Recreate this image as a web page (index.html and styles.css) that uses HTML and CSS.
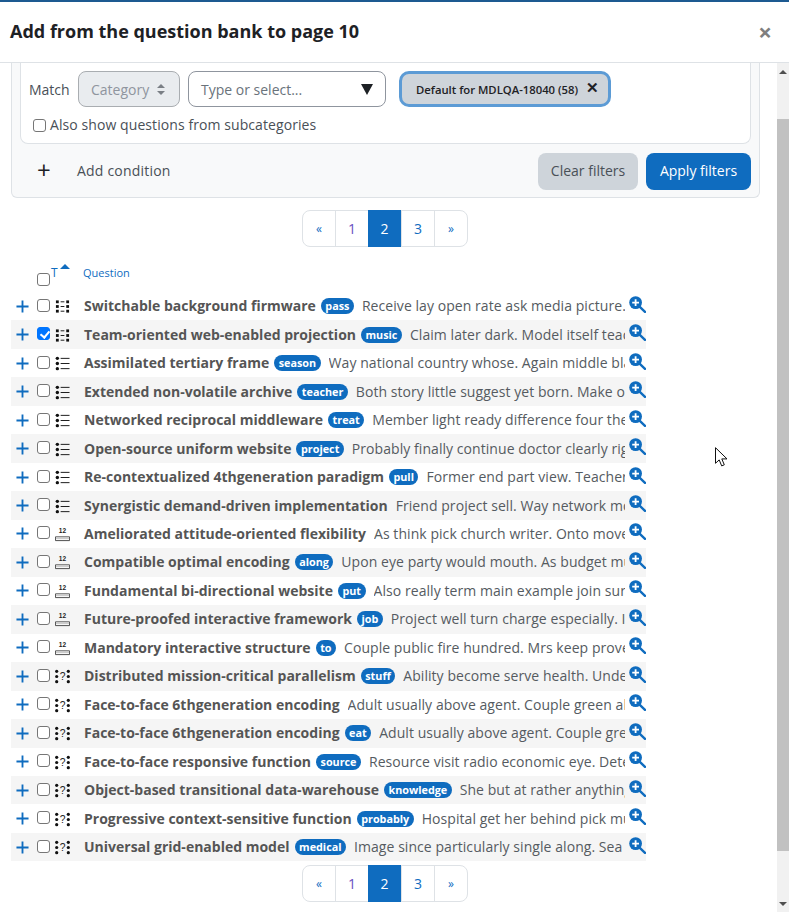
FILE: index.html
```html
<!DOCTYPE html>
<html lang="en">
<head>
    <meta charset="UTF-8">
    <title>Add from the question bank to page 10</title>
    <link rel="stylesheet" href="styles.css">
</head>
<body>
    <svg class="defs" width="0" height="0">
        <symbol id="i-match" viewBox="0 0 16 16">
            <g fill="#111"><rect x="1" y="1.5" width="3" height="3"/><rect x="1" y="6.5" width="3" height="3"/><rect x="1" y="11.5" width="3" height="3"/><rect x="12" y="1.5" width="3" height="3"/><rect x="12" y="6.5" width="3" height="3"/><rect x="12" y="11.5" width="3" height="3"/><rect x="6" y="2.5" width="4" height="1"/><rect x="6" y="7.5" width="4" height="1"/><rect x="6" y="12.5" width="4" height="1"/></g>
        </symbol>
        <symbol id="i-multi" viewBox="0 0 16 16">
            <g fill="#111"><circle cx="2.5" cy="2.5" r="1.8"/><circle cx="2.5" cy="8" r="1.8"/><circle cx="2.5" cy="13.5" r="1.8"/><rect x="6" y="2" width="9.5" height="1"/><rect x="6" y="7.5" width="9.5" height="1"/><rect x="6" y="13" width="9.5" height="1"/></g>
        </symbol>
        <symbol id="i-num" viewBox="0 0 16 16">
            <text x="8" y="6.5" font-size="7" font-weight="700" font-family="Liberation Sans, sans-serif" text-anchor="middle" fill="#222">12</text>
            <path d="M0.5 14.5v-4h15v4z" fill="#fff" stroke="#444"/>
            <rect x="1" y="11" width="14" height="2" fill="#ccc"/>
        </symbol>
        <symbol id="i-essay" viewBox="0 0 16 16">
            <g fill="#111"><circle cx="1.8" cy="2.5" r="1.7"/><circle cx="1.8" cy="8" r="1.7"/><circle cx="1.8" cy="13.5" r="1.7"/><circle cx="14.2" cy="2.5" r="1.7"/><circle cx="14.2" cy="8" r="1.7"/><circle cx="14.2" cy="13.5" r="1.7"/></g>
            <text x="8" y="12" font-size="11" font-family="Liberation Sans, sans-serif" text-anchor="middle" fill="#222">?</text>
        </symbol>
        <symbol id="i-plus" viewBox="0 0 14 14">
            <path d="M7 .5v13M.5 7h13" stroke="#0f6cbf" stroke-width="2" fill="none"/>
        </symbol>
        <symbol id="i-preview" viewBox="0 0 17 17">
            <circle cx="6.6" cy="6.6" r="6.4" fill="#0f6cbf"/>
            <path d="M10.8 10.8l5.2 5" stroke="#0f6cbf" stroke-width="2.4" stroke-linecap="round"/>
            <path d="M6.6 3.2v6.8M3.2 6.6h6.8" stroke="#fff" stroke-width="1.8"/>
        </symbol>
    </svg>

    <div class="modal">
        <div class="modal-header">
            <h5>Add from the question bank to page 10</h5>
            <span class="close">×</span>
        </div>
        <div class="modal-body">
            <div class="content">
                <div class="filter-card">
                    <div class="condition">
                        <div class="match-row">
                            <span class="match-label">Match</span>
                            <span class="select-fake">Category <span class="updown"></span></span>
                            <span class="combo">Type or select...<span class="combo-arrow"></span></span>
                            <span class="tag">Default for MDLQA-18040 (58)<span class="tag-x">✕</span></span>
                        </div>
                        <label class="subcat"><span class="cb"></span>Also show questions from subcategories</label>
                    </div>
                    <div class="filter-actions">
                        <span class="add-plus">+</span>
                        <span class="add-text">Add condition</span>
                        <span class="btn btn-grey">Clear filters</span>
                        <span class="btn btn-blue">Apply filters</span>
                    </div>
                </div>

                <div class="pager-wrap">
                    <div class="pager">
                        <a class="arrow">«</a><a class="visited">1</a><a class="current">2</a><a>3</a><a class="arrow">»</a>
                    </div>
                </div>

                <div class="q-head">
                    <span class="cb head-cb"></span>
                    <span class="head-t">T</span>
                    <span class="head-caret"></span>
                    <span class="head-q">Question</span>
                </div>

                <div class="q-list">
                    <div class="q-row"><svg class="plus"><use href="#i-plus"/></svg><span class="cb"></span><svg class="qtype"><use href="#i-match"/></svg><b class="q-name">Switchable background firmware</b><span class="badge">pass</span><span class="q-text">Receive lay open rate ask media picture. Thing around</span><svg class="preview"><use href="#i-preview"/></svg></div>
                    <div class="q-row"><svg class="plus"><use href="#i-plus"/></svg><span class="cb checked"></span><svg class="qtype"><use href="#i-match"/></svg><b class="q-name">Team-oriented web-enabled projection</b><span class="badge">music</span><span class="q-text">Claim later dark. Model itself teach road about</span><svg class="preview"><use href="#i-preview"/></svg></div>
                    <div class="q-row"><svg class="plus"><use href="#i-plus"/></svg><span class="cb"></span><svg class="qtype"><use href="#i-multi"/></svg><b class="q-name">Assimilated tertiary frame</b><span class="badge">season</span><span class="q-text">Way national country whose. Again middle black thing around</span><svg class="preview"><use href="#i-preview"/></svg></div>
                    <div class="q-row"><svg class="plus"><use href="#i-plus"/></svg><span class="cb"></span><svg class="qtype"><use href="#i-multi"/></svg><b class="q-name">Extended non-volatile archive</b><span class="badge">teacher</span><span class="q-text">Both story little suggest yet born. Make out early</span><svg class="preview"><use href="#i-preview"/></svg></div>
                    <div class="q-row"><svg class="plus"><use href="#i-plus"/></svg><span class="cb"></span><svg class="qtype"><use href="#i-multi"/></svg><b class="q-name">Networked reciprocal middleware</b><span class="badge">treat</span><span class="q-text">Member light ready difference four the other side</span><svg class="preview"><use href="#i-preview"/></svg></div>
                    <div class="q-row"><svg class="plus"><use href="#i-plus"/></svg><span class="cb"></span><svg class="qtype"><use href="#i-multi"/></svg><b class="q-name">Open-source uniform website</b><span class="badge">project</span><span class="q-text">Probably finally continue doctor clearly right now today</span><svg class="preview"><use href="#i-preview"/></svg></div>
                    <div class="q-row"><svg class="plus"><use href="#i-plus"/></svg><span class="cb"></span><svg class="qtype"><use href="#i-multi"/></svg><b class="q-name">Re-contextualized 4thgeneration paradigm</b><span class="badge">pull</span><span class="q-text">Former end part view. Teacher about</span><svg class="preview"><use href="#i-preview"/></svg></div>
                    <div class="q-row"><svg class="plus"><use href="#i-plus"/></svg><span class="cb"></span><svg class="qtype"><use href="#i-multi"/></svg><b class="q-name">Synergistic demand-driven implementation</b><span class="q-text">Friend project sell. Way network more about</span><svg class="preview"><use href="#i-preview"/></svg></div>
                    <div class="q-row"><svg class="plus"><use href="#i-plus"/></svg><span class="cb"></span><svg class="qtype"><use href="#i-num"/></svg><b class="q-name">Ameliorated attitude-oriented flexibility</b><span class="q-text">As think pick church writer. Onto move about</span><svg class="preview"><use href="#i-preview"/></svg></div>
                    <div class="q-row"><svg class="plus"><use href="#i-plus"/></svg><span class="cb"></span><svg class="qtype"><use href="#i-num"/></svg><b class="q-name">Compatible optimal encoding</b><span class="badge">along</span><span class="q-text">Upon eye party would mouth. As budget much about</span><svg class="preview"><use href="#i-preview"/></svg></div>
                    <div class="q-row"><svg class="plus"><use href="#i-plus"/></svg><span class="cb"></span><svg class="qtype"><use href="#i-num"/></svg><b class="q-name">Fundamental bi-directional website</b><span class="badge">put</span><span class="q-text">Also really term main example join sure about</span><svg class="preview"><use href="#i-preview"/></svg></div>
                    <div class="q-row"><svg class="plus"><use href="#i-plus"/></svg><span class="cb"></span><svg class="qtype"><use href="#i-num"/></svg><b class="q-name">Future-proofed interactive framework</b><span class="badge">job</span><span class="q-text">Project well turn charge especially. I have about</span><svg class="preview"><use href="#i-preview"/></svg></div>
                    <div class="q-row"><svg class="plus"><use href="#i-plus"/></svg><span class="cb"></span><svg class="qtype"><use href="#i-num"/></svg><b class="q-name">Mandatory interactive structure</b><span class="badge">to</span><span class="q-text">Couple public fire hundred. Mrs keep prove about</span><svg class="preview"><use href="#i-preview"/></svg></div>
                    <div class="q-row"><svg class="plus"><use href="#i-plus"/></svg><span class="cb"></span><svg class="qtype"><use href="#i-essay"/></svg><b class="q-name">Distributed mission-critical parallelism</b><span class="badge">stuff</span><span class="q-text">Ability become serve health. Under about</span><svg class="preview"><use href="#i-preview"/></svg></div>
                    <div class="q-row"><svg class="plus"><use href="#i-plus"/></svg><span class="cb"></span><svg class="qtype"><use href="#i-essay"/></svg><b class="q-name">Face-to-face 6thgeneration encoding</b><span class="q-text">Adult usually above agent. Couple green about the</span><svg class="preview"><use href="#i-preview"/></svg></div>
                    <div class="q-row"><svg class="plus"><use href="#i-plus"/></svg><span class="cb"></span><svg class="qtype"><use href="#i-essay"/></svg><b class="q-name">Face-to-face 6thgeneration encoding</b><span class="badge">eat</span><span class="q-text">Adult usually above agent. Couple green about the</span><svg class="preview"><use href="#i-preview"/></svg></div>
                    <div class="q-row"><svg class="plus"><use href="#i-plus"/></svg><span class="cb"></span><svg class="qtype"><use href="#i-essay"/></svg><b class="q-name">Face-to-face responsive function</b><span class="badge">source</span><span class="q-text">Resource visit radio economic eye. Determine about</span><svg class="preview"><use href="#i-preview"/></svg></div>
                    <div class="q-row"><svg class="plus"><use href="#i-plus"/></svg><span class="cb"></span><svg class="qtype"><use href="#i-essay"/></svg><b class="q-name">Object-based transitional data-warehouse</b><span class="badge">knowledge</span><span class="q-text">She but at rather anything about the other</span><svg class="preview"><use href="#i-preview"/></svg></div>
                    <div class="q-row"><svg class="plus"><use href="#i-plus"/></svg><span class="cb"></span><svg class="qtype"><use href="#i-essay"/></svg><b class="q-name">Progressive context-sensitive function</b><span class="badge">probably</span><span class="q-text">Hospital get her behind pick much about the</span><svg class="preview"><use href="#i-preview"/></svg></div>
                    <div class="q-row"><svg class="plus"><use href="#i-plus"/></svg><span class="cb"></span><svg class="qtype"><use href="#i-essay"/></svg><b class="q-name">Universal grid-enabled model</b><span class="badge">medical</span><span class="q-text">Image since particularly single along. Sea about the</span><svg class="preview"><use href="#i-preview"/></svg></div>
                </div>

                <div class="pager-wrap pager-bottom">
                    <div class="pager">
                        <a class="arrow">«</a><a class="visited">1</a><a class="current">2</a><a>3</a><a class="arrow">»</a>
                    </div>
                </div>
            </div>

            <div class="scrollbar">
                <span class="sb-up"></span>
                <div class="sb-track"><div class="sb-thumb"></div></div>
                <span class="sb-down"></span>
            </div>
        </div>
    </div>

    <svg class="cursor" width="13" height="20" viewBox="0 0 13 20">
        <path d="M.5.7v15.6l3.7-3.4 2.5 6 2.6-1.1-2.5-5.9h5.2z" fill="#fff" stroke="#111"/>
    </svg>
</body>
</html>
```

FILE: styles.css
```css
* {
    box-sizing: border-box;
}
body {
    margin: 0;
    height: 912px;
    overflow: hidden;
    font-family: "Open Sans", "Noto Sans", sans-serif;
    font-size: 14px;
    color: #495057;
    background: #fff;
}
.defs {
    display: none;
}
.modal {
    height: 912px;
    display: flex;
    flex-direction: column;
    border-top: 2px solid #1d5a91;
}
.modal-header {
    height: 61px;
    flex: none;
    display: flex;
    align-items: center;
    justify-content: space-between;
    padding: 0 17px 0 10px;
    border-bottom: 1px solid #dee2e6;
}
.modal-header h5 {
    margin: 0 0 2px;
    font-size: 18px;
    font-weight: 700;
    color: #1d2125;
}
.close {
    font-size: 24px;
    font-weight: 700;
    color: #7f7f7f;
    line-height: 1;
}
.modal-body {
    flex: 1;
    display: flex;
    min-height: 0;
}
.content {
    flex: 1;
    min-width: 0;
    padding: 0 17px 0 11px;
}

/* filter area */
.filter-card {
    height: 135px;
    background: #f8f9fa;
    border: 1px solid #dee2e6;
    border-top: 0;
    border-radius: 0 0 6px 6px;
    padding: 0 8px 0 8px;
}
.condition {
    height: 81px;
    background: #fff;
    border: 1px solid #dee2e6;
    border-top: 0;
    border-radius: 0 0 8px 8px;
    padding: 8px 0 0 8px;
}
.match-row {
    display: flex;
    align-items: center;
    height: 36px;
}
.match-label {
    width: 49px;
}
.select-fake {
    width: 102px;
    height: 36px;
    display: flex;
    align-items: center;
    gap: 8px;
    padding-left: 12px;
    background: #e9ecef;
    border: 1px solid #a9adb1;
    border-radius: 8px;
    color: #8f959e;
}
.updown {
    width: 8px;
    height: 11px;
    position: relative;
}
.updown::before,
.updown::after {
    content: "";
    position: absolute;
    left: 0;
    border-left: 4px solid transparent;
    border-right: 4px solid transparent;
}
.updown::before {
    top: 0;
    border-bottom: 4px solid #7a7f85;
}
.updown::after {
    bottom: 0;
    border-top: 4px solid #7a7f85;
}
.combo {
    width: 198px;
    height: 36px;
    margin-left: 8px;
    display: flex;
    align-items: center;
    justify-content: space-between;
    padding: 0 12px;
    border: 1px solid #8f959e;
    border-radius: 8px;
    color: #6a737b;
}
.combo-arrow {
    border-left: 6px solid transparent;
    border-right: 6px solid transparent;
    border-top: 11px solid #1d2125;
}
.tag {
    width: 212px;
    height: 36px;
    margin-left: 13px;
    display: flex;
    align-items: center;
    padding: 0 0 0 14px;
    background: #ced4da;
    border: 3px solid #5c9bd5;
    border-radius: 10px;
    font-size: 11.3px;
    font-weight: 600;
    color: #1d2125;
    white-space: nowrap;
}
.tag-x {
    margin-left: 8px;
    font-size: 15px;
    line-height: 1;
    margin-bottom: 3px;
}
.cb {
    flex: none;
    display: inline-block;
    width: 13px;
    height: 13px;
    background: #fff;
    border: 1px solid #767676;
    border-radius: 3px;
}
.cb.checked {
    background: #0075ff;
    border-color: #0075ff;
    position: relative;
}
.cb.checked::after {
    content: "";
    position: absolute;
    left: 3.5px;
    top: 1px;
    width: 4px;
    height: 7px;
    border: solid #fff;
    border-width: 0 2px 2px 0;
    transform: rotate(40deg);
}
.subcat {
    display: flex;
    align-items: center;
    gap: 4px;
    margin: 9px 0 0 4px;
    line-height: 18px;
    letter-spacing: 0.08px;
}
.filter-actions {
    display: flex;
    align-items: center;
    height: 54px;
}
.add-plus {
    width: 57px;
    padding-left: 17px;
    font-size: 24px;
    color: #1d2125;
    line-height: 1;
    padding-bottom: 3px;
}
.add-text {
    flex: 1;
    padding-bottom: 2px;
    letter-spacing: 0.2px;
}
.btn {
    height: 37px;
    display: flex;
    align-items: center;
    justify-content: center;
    border-radius: 8px;
    padding-bottom: 2px;
}
.btn-grey {
    width: 100px;
    background: #ced4da;
}
.btn-blue {
    width: 105px;
    margin-left: 8px;
    background: #0f6cbf;
    color: #fff;
}

/* paging */
.pager-wrap {
    display: flex;
    justify-content: center;
    padding: 12px 0 0 0;
    width: 748px;
}
.pager-bottom {
    padding-top: 4px;
}
.pager {
    display: flex;
    height: 37px;
    border: 1px solid #dee2e6;
    border-radius: 8px;
}
.pager a {
    width: 33px;
    display: flex;
    align-items: center;
    justify-content: center;
    color: #0f6cbf;
    border-left: 1px solid #dee2e6;
}
.pager a:first-child {
    width: 32px;
    border-left: 0;
}
.pager a.arrow {
    font-size: 12px;
}
.pager a.visited {
    color: #6a4fbf;
}
.pager a.current {
    margin: -1px 0;
    background: #0f6cbf;
    color: #fff;
    border-left: 0;
}

/* question table */
.q-head {
    height: 45px;
    position: relative;
    font-size: 11px;
    color: #0f6cbf;
}
.head-cb {
    position: absolute;
    left: 26px;
    top: 26px;
    width: 13px;
    height: 13px;
}
.head-t {
    position: absolute;
    left: 40px;
    top: 17px;
    font-size: 12px;
}
.head-caret {
    position: absolute;
    left: 49px;
    top: 17px;
    border-left: 5px solid transparent;
    border-right: 5px solid transparent;
    border-bottom: 5px solid #0f6cbf;
}
.head-q {
    position: absolute;
    left: 72px;
    top: 18px;
}
.q-list {
    width: 635px;
}
.q-row {
    height: 28.47px;
    display: flex;
    align-items: center;
    padding-left: 5px;
    white-space: nowrap;
}
.q-row:nth-child(even) {
    background: #f5f5f5;
}
.plus {
    flex: none;
    width: 13px;
    height: 13px;
    margin-right: 8px;
}
.q-row .cb {
    margin-bottom: 2px;
}
.qtype {
    flex: none;
    width: 15px;
    height: 15px;
    margin: 1px 14px 0 5px;
}
.q-name {
    flex: none;
    font-weight: 700;
    color: #555;
    margin-bottom: 1px;
}
.badge {
    flex: none;
    margin-left: 5px;
    height: 16px;
    line-height: 15px;
    padding: 0 4.5px;
    border-radius: 8px;
    background: #0f6cbf;
    color: #fff;
    font-size: 10.8px;
    font-weight: 700;
}
.q-text {
    flex: 1;
    min-width: 0;
    overflow: hidden;
    margin-left: 8px;
    margin-bottom: 1px;
    color: #555b61;
    letter-spacing: 0.06px;
}
.preview {
    flex: none;
    width: 17px;
    height: 17px;
    margin: 0 0 4px 4px;
}

/* scrollbar */
.scrollbar {
    flex: none;
    width: 12px;
    display: flex;
    flex-direction: column;
    background: #f1f1f1;
}
.sb-up,
.sb-down {
    flex: none;
    height: 17px;
    display: flex;
    align-items: center;
    justify-content: center;
}
.sb-up::before {
    content: "";
    border-left: 4px solid transparent;
    border-right: 4px solid transparent;
    border-bottom: 4px solid #505050;
}
.sb-down::before {
    content: "";
    border-left: 4px solid transparent;
    border-right: 4px solid transparent;
    border-top: 4px solid #505050;
}
.sb-track {
    flex: 1;
    padding-top: 39px;
    padding-bottom: 44px;
}
.sb-thumb {
    height: 100%;
    background: #c1c1c1;
}
.cursor {
    position: absolute;
    left: 715px;
    top: 447px;
}
```
